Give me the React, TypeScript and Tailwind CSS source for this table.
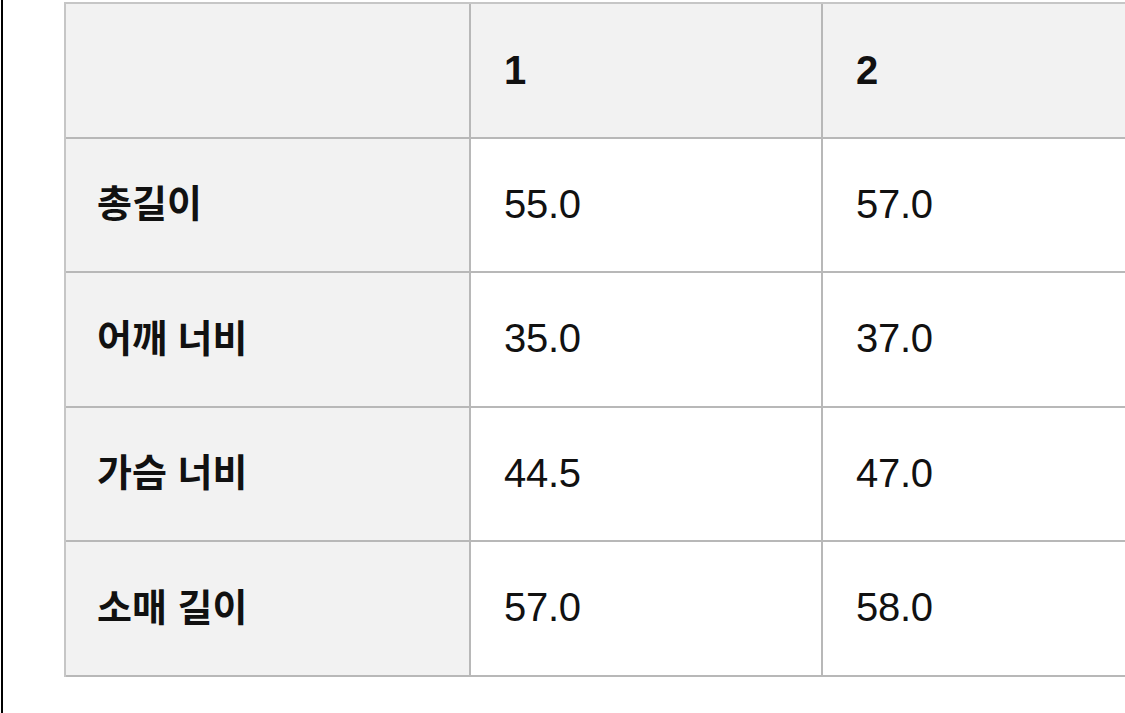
const columns = ['', '1', '2'];

const rows: { label: string; values: string[] }[] = [
  { label: '총길이', values: ['55.0', '57.0'] },
  { label: '어깨 너비', values: ['35.0', '37.0'] },
  { label: '가슴 너비', values: ['44.5', '47.0'] },
  { label: '소매 길이', values: ['57.0', '58.0'] },
];

const font = { fontFamily: '"Liberation Sans", "Noto Sans CJK KR", sans-serif' };

export default function App() {
  return (
    <div className="flex h-[713px] w-[1125px] overflow-hidden bg-white text-[#111]" style={font}>
      {/* window edge */}
      <div className="ml-[1px] h-full w-[2px] shrink-0 bg-black" />

      <div className="ml-[61px] mt-[2px] shrink-0">
        <div className="border-l-2 border-t-2 border-[#c6c6c6]">
          {/* header */}
          <div className="flex bg-[#f2f2f2]">
            {columns.map((c, i) => (
              <div
                key={i}
                className={`flex h-[134.5px] items-center border-b-2 border-r-2 border-[#b8b8b8] px-[33px] text-[40px] font-bold ${
                  i === 0 ? 'w-[405px]' : 'w-[352px]'
                }`}
              >
                {c}
              </div>
            ))}
          </div>

          {rows.map((r) => (
            <div key={r.label} className="flex">
              <div className="flex h-[134.5px] w-[405px] items-center border-b-2 border-r-2 border-[#b8b8b8] bg-[#f2f2f2] pl-[31px] text-[38px] font-bold">
                {r.label}
              </div>
              {r.values.map((v, j) => (
                <div
                  key={j}
                  className="flex h-[134.5px] w-[352px] items-center border-b-2 border-r-2 border-[#b8b8b8] bg-white px-[33px] pb-[2px] text-[40px] tracking-[-0.3px]"
                >
                  {v}
                </div>
              ))}
            </div>
          ))}
        </div>
      </div>
    </div>
  );
}
